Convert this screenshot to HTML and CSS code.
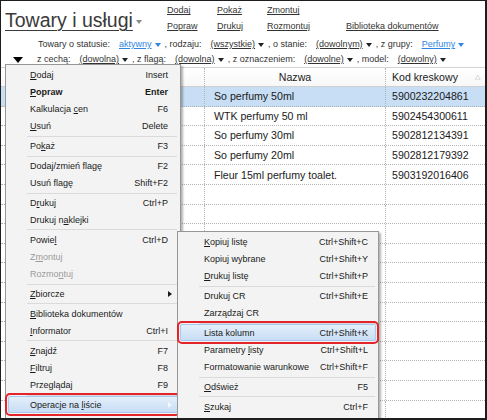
FILE: index.html
```html
<!DOCTYPE html>
<html lang="pl">
<head>
<meta charset="utf-8">
<title>Towary i usługi</title>
<link rel="stylesheet" href="styles.css">
</head>
<body>
<div class="window">
  <header class="top">
    <div class="title-wrap">
      <span class="title">Towary i usługi</span><span class="title-caret"></span>
    </div>
    <nav class="actions">
      <a>Dodaj</a><a>Pokaż</a><a>Zmontuj</a><span></span>
      <a>Popraw</a><a>Drukuj</a><a>Rozmontuj</a><a>Biblioteka dokumentów</a>
    </nav>
  </header>

  <div class="filters">
    <div class="frow frow1">
      <span class="lbl first">Towary o statusie:</span>
      <span class="dd blue">aktywny<i class="tri"></i></span>
      <span class="lbl">, rodzaju:</span>
      <span class="dd">(wszystkie)<i class="tri"></i></span>
      <span class="lbl">, o stanie:</span>
      <span class="dd">(dowolnym)<i class="tri"></i></span>
      <span class="lbl">, z grupy:</span>
      <span class="dd blue">Perfumy<i class="tri"></i></span>
    </div>
    <div class="frow frow2">
      <span class="bigarrow"></span>
      <span class="lbl after-arrow">z cechą:</span>
      <span class="dd">(dowolna)<i class="tri"></i></span>
      <span class="lbl">, z flagą:</span>
      <span class="dd">(dowolna)<i class="tri"></i></span>
      <span class="lbl">, z oznaczeniem:</span>
      <span class="dd">(dowolne)<i class="tri"></i></span>
      <span class="lbl">, model:</span>
      <span class="dd">(dowolny)<i class="tri"></i></span>
    </div>
  </div>

  <div class="grid">
    <div class="row head"><div class="c c0"></div><div class="c c1">Nazwa</div><div class="c c2">Kod kreskowy<span class="sort">△</span></div></div>
    <div class="row sel"><div class="c c0"></div><div class="c c1">So perfumy 50ml</div><div class="c c2">5900232204861</div></div>
    <div class="row"><div class="c c0"></div><div class="c c1">WTK perfumy 50 ml</div><div class="c c2">5902454300611</div></div>
    <div class="row"><div class="c c0"></div><div class="c c1">So perfumy 30ml</div><div class="c c2">5902812134391</div></div>
    <div class="row"><div class="c c0"></div><div class="c c1">So perfumy 20ml</div><div class="c c2">5902812179392</div></div>
    <div class="row"><div class="c c0"></div><div class="c c1">Fleur 15ml perfumy toalet.</div><div class="c c2">5903192016406</div></div>
    <div class="row"><div class="c c0"></div><div class="c c1"></div><div class="c c2"></div></div>
    <div class="row"><div class="c c0"></div><div class="c c1"></div><div class="c c2"></div></div>
    <div class="row"><div class="c c0"></div><div class="c c1"></div><div class="c c2"></div></div>
    <div class="row"><div class="c c0"></div><div class="c c1"></div><div class="c c2"></div></div>
    <div class="row"><div class="c c0"></div><div class="c c1"></div><div class="c c2"></div></div>
    <div class="row"><div class="c c0"></div><div class="c c1"></div><div class="c c2"></div></div>
    <div class="row"><div class="c c0"></div><div class="c c1"></div><div class="c c2"></div></div>
    <div class="row"><div class="c c0"></div><div class="c c1"></div><div class="c c2"></div></div>
    <div class="row"><div class="c c0"></div><div class="c c1"></div><div class="c c2"></div></div>
    <div class="row"><div class="c c0"></div><div class="c c1"></div><div class="c c2"></div></div>
    <div class="row"><div class="c c0"></div><div class="c c1"></div><div class="c c2"></div></div>
    <div class="row"><div class="c c0"></div><div class="c c1"></div><div class="c c2"></div></div>
  </div>

  <div class="menu main">
    <div class="item"><span><u>D</u>odaj</span><span>Insert</span></div>
    <div class="item bold"><span><u>P</u>opraw</span><span>Enter</span></div>
    <div class="item"><span>Kalkulacja <u>c</u>en</span><span>F6</span></div>
    <div class="item"><span><u>U</u>suń</span><span>Delete</span></div>
    <div class="sep"></div>
    <div class="item"><span>Po<u>k</u>aż</span><span>F3</span></div>
    <div class="sep"></div>
    <div class="item"><span>Dodaj/zmień fla<u>g</u>ę</span><span>F2</span></div>
    <div class="item"><span>Usuń fla<u>g</u>ę</span><span>Shift+F2</span></div>
    <div class="sep"></div>
    <div class="item"><span>D<u>r</u>ukuj</span><span>Ctrl+P</span></div>
    <div class="item"><span>Drukuj n<u>a</u>klejki</span><span></span></div>
    <div class="sep"></div>
    <div class="item"><span>Powie<u>l</u></span><span>Ctrl+D</span></div>
    <div class="item dis"><span>Z<u>m</u>ontuj</span><span></span></div>
    <div class="item dis"><span>Rozmo<u>n</u>tuj</span><span></span></div>
    <div class="sep"></div>
    <div class="item"><span><u>Z</u>biorcze</span><i class="arrow"></i></div>
    <div class="sep"></div>
    <div class="item"><span><u>B</u>iblioteka dokumentów</span><span></span></div>
    <div class="item"><span><u>I</u>nformator</span><span>Ctrl+I</span></div>
    <div class="sep"></div>
    <div class="item"><span><u>Z</u>najdź</span><span>F7</span></div>
    <div class="item"><span><u>F</u>iltruj</span><span>F8</span></div>
    <div class="item"><span>Przeglądaj</span><span>F9</span></div>
    <div class="sep"></div>
    <div class="item hl"><span>Operacje na <u>l</u>iście</span><i class="arrow light"></i></div>
  </div>

  <div class="menu sub">
    <div class="item"><span><u>K</u>opiuj listę</span><span>Ctrl+Shift+C</span></div>
    <div class="item"><span>Kopiuj wybrane</span><span>Ctrl+Shift+Y</span></div>
    <div class="item"><span><u>D</u>rukuj listę</span><span>Ctrl+Shift+P</span></div>
    <div class="sep"></div>
    <div class="item"><span>Drukuj CR</span><span>Ctrl+Shift+E</span></div>
    <div class="item"><span>Zarządzaj CR</span><span></span></div>
    <div class="sep"></div>
    <div class="item hl"><span>Lista kolumn</span><span>Ctrl+Shift+K</span></div>
    <div class="item"><span>Parametry <u>l</u>isty</span><span>Ctrl+Shift+L</span></div>
    <div class="item"><span>Formatowanie warunkowe</span><span>Ctrl+Shift+F</span></div>
    <div class="sep"></div>
    <div class="item"><span><u>O</u>dśwież</span><span>F5</span></div>
    <div class="sep"></div>
    <div class="item"><span><u>S</u>zukaj</span><span>Ctrl+F</span></div>
  </div>
</div>
</body>
</html>
```

FILE: styles.css
```css
body {
  margin: 0;
  background: #fff;
}

.window {
  position: relative;
  width: 487px;
  height: 420px;
  box-sizing: border-box;
  border: 1px solid #1e1e1e;
  border-right-width: 2px;
  border-bottom-width: 2px;
  background: #fff;
  overflow: hidden;
  font-family: "Liberation Sans", Arial, sans-serif;
  color: #222;
}

/* ---------- header ---------- */
.top {
  display: flex;
  height: 35px;
}

.title-wrap {
  width: 162px;
  padding-left: 4px;
  padding-top: 8px;
  display: flex;
  align-items: flex-start;
}

.title {
  font-size: 19.5px;
  line-height: 22px;
  color: #3a3a3a;
  text-decoration: underline;
  text-decoration-thickness: 1px;
  text-underline-offset: 3px;
  white-space: nowrap;
}

.title-caret {
  margin: 11px 0 0 3px;
  width: 0;
  height: 0;
  border-left: 3.5px solid transparent;
  border-right: 3.5px solid transparent;
  border-top: 4px solid #8a8a8a;
}

.actions {
  display: grid;
  grid-template-columns: 50px 50px 79px auto;
  padding-top: 3.4px;
  font-size: 9px;
  line-height: 13px;
}

.actions a {
  color: #333;
  text-decoration: underline;
  white-space: nowrap;
}

/* ---------- filters ---------- */
.filters {
  height: 31px;
  box-sizing: border-box;
  padding-top: 1px;
  font-size: 9px;
  line-height: 15px;
  color: #333;
}

.frow {
  display: flex;
  align-items: center;
  height: 15px;
  white-space: nowrap;
}

.frow1 {
  padding-left: 37px;
}

.frow2 {
  padding-left: 12px;
}

.lbl {
  margin-left: 4px;
}

.lbl.first {
  margin-left: 0;
}

.lbl.after-arrow {
  margin-left: 14px;
}

.dd {
  margin-left: 9px;
  text-decoration: underline;
  color: #333;
  display: inline-flex;
  align-items: center;
}

.dd.blue {
  color: #2f86e0;
}

.tri {
  display: inline-block;
  margin-left: 3px;
  width: 0;
  height: 0;
  border-left: 3.5px solid transparent;
  border-right: 3.5px solid transparent;
  border-top: 4px solid #222;
}

.dd.blue .tri {
  border-top-color: #2f86e0;
}

.bigarrow {
  width: 0;
  height: 0;
  border-left: 5px solid transparent;
  border-right: 5px solid transparent;
  border-top: 6px solid #000;
  margin-top: 1px;
}

/* ---------- grid ---------- */
.grid {
  border-top: 1px solid #d4d4d4;
}

.row {
  display: grid;
  grid-template-columns: 204px 181px 1fr;
  height: 19.6px;
  box-sizing: border-box;
  border-bottom: 1px dotted #b3b3b3;
}

.row.head {
  height: 19px;
  border-bottom: 1px solid #d0d0d0;
  background: linear-gradient(#ffffff, #f7f7f7);
}

.row.sel {
  background: #c8def5;
}

.c {
  display: flex;
  align-items: center;
  border-right: 1px dotted #b3b3b3;
  font-size: 10.6px;
  color: #1a1a1a;
  white-space: nowrap;
  overflow: hidden;
}

.c1 {
  padding-left: 9px;
}

.c2 {
  padding-left: 6px;
  border-right: none;
}

.head .c1 {
  justify-content: center;
  padding-left: 0;
}

.sort {
  margin-left: auto;
  padding-right: 5px;
  font-size: 7px;
  color: #b0b0b0;
}

/* ---------- menus ---------- */
.menu {
  position: absolute;
  box-sizing: border-box;
  background: #f3f3f3;
  border: 1px solid #979797;
  box-shadow: 2px 2px 2px rgba(0, 0, 0, 0.3);
  padding: 1px 2px;
  font-size: 9px;
  color: #1a1a1a;
}

.main {
  left: 4px;
  top: 63px;
  width: 176px;
  height: 400px;
}

.sub {
  left: 176px;
  top: 230px;
  width: 202px;
  height: 200px;
}

.item {
  position: relative;
  height: 17.2px;
  display: flex;
  align-items: center;
  justify-content: space-between;
  padding: 0 10px 0 22px;
  white-space: nowrap;
}

.sub .item {
  padding: 0 8px 0 24px;
}

.item u {
  text-decoration: underline;
}

.item.bold {
  font-weight: bold;
}

.item.dis {
  color: #9b9b9b;
}

.item.hl {
  background: linear-gradient(#e6f0fb, #c6dcf4);
  box-shadow: inset 0 0 0 1px #a9c9ec;
  border-radius: 2px;
  outline: 2px solid #e3242b;
  outline-offset: 1px;
}

.sep {
  position: relative;
  height: 2.6px;
}

.sep::after {
  content: "";
  position: absolute;
  left: 19px;
  right: 1px;
  top: 1px;
  height: 1px;
  background: #dadada;
}

.arrow {
  width: 0;
  height: 0;
  border-top: 3.5px solid transparent;
  border-bottom: 3.5px solid transparent;
  border-left: 4px solid #1a1a1a;
  margin-right: -4px;
}

.arrow.light {
  border-left-color: #f4f7fb;
}
```
